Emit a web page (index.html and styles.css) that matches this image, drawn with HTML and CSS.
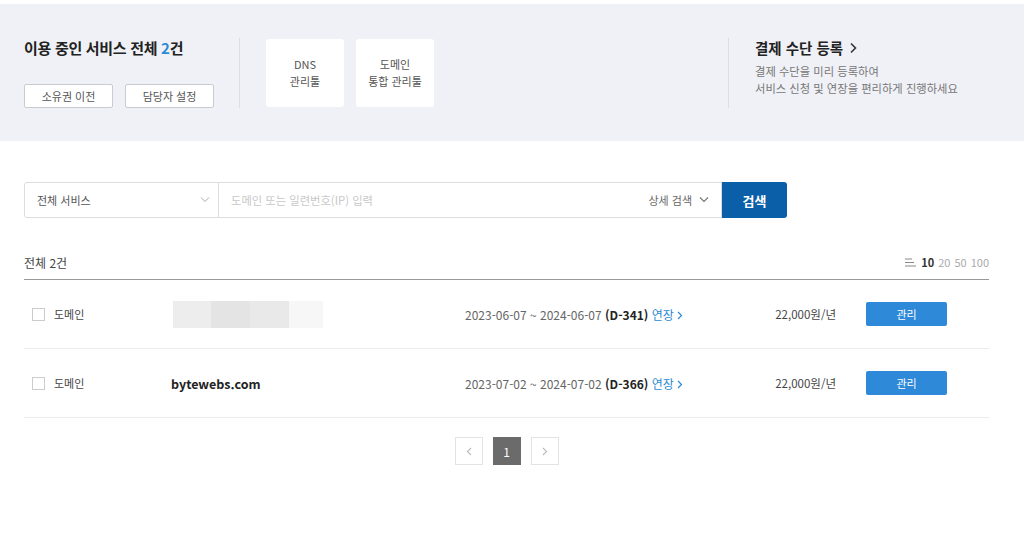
FILE: index.html
```html
<!DOCTYPE html>
<html lang="ko">
<head>
    <meta charset="UTF-8">
    <meta name="viewport" content="width=device-width, initial-scale=1.0">
    <title>서비스 관리</title>
    <link rel="stylesheet" href="styles.css">
</head>
<body>
    <div class="summary-panel">
        <div class="summary">
            <h2 class="summary-title">이용 중인 서비스 전체 <span class="count">2</span>건</h2>
            <div class="summary-actions">
                <button class="btn-line">소유권 이전</button>
                <button class="btn-line">담당자 설정</button>
            </div>
        </div>
        <div class="tools">
            <a class="tool-card" href="#">DNS<br>관리툴</a>
            <a class="tool-card" href="#">도메인<br>통합 관리툴</a>
        </div>
        <div class="payment">
            <a class="payment-title" href="#">결제 수단 등록
                <svg width="9" height="12" viewBox="0 0 9 12"><path d="M2 1.5 L6.5 6 L2 10.5" fill="none" stroke="#333" stroke-width="1.6"/></svg>
            </a>
            <p class="payment-desc">결제 수단을 미리 등록하여<br>서비스 신청 및 연장을 편리하게 진행하세요</p>
        </div>
    </div>

    <div class="content">
        <form class="search-bar">
            <div class="select-box">
                <span>전체 서비스</span>
                <svg width="10" height="6" viewBox="0 0 10 6"><path d="M1 0.5 L5 4.5 L9 0.5" fill="none" stroke="#aaa" stroke-width="1"/></svg>
            </div>
            <div class="search-input">
                <input type="text" placeholder="도메인 또는 일련번호(IP) 입력">
                <span class="detail-search">상세 검색
                    <svg width="10" height="6" viewBox="0 0 10 6"><path d="M1 0.5 L5 4.5 L9 0.5" fill="none" stroke="#777" stroke-width="1.1"/></svg>
                </span>
            </div>
            <button type="submit" class="btn-search">검색</button>
        </form>

        <div class="list-head">
            <span class="total">전체 2건</span>
            <div class="page-size">
                <svg width="11" height="9" viewBox="0 0 11 9"><path d="M0 1 H7 M0 4.5 H9 M0 8 H11" stroke="#888" stroke-width="1"/></svg>
                <span class="on">10</span><span>20</span><span>50</span><span>100</span>
            </div>
        </div>

        <ul class="service-list">
            <li class="service-row">
                <label class="kind"><span class="checkbox"></span>도메인</label>
                <div class="name">
                    <div class="blurred">
                        <span class="b1"></span><span class="b2"></span><span class="b3"></span><span class="b4"></span>
                    </div>
                </div>
                <div class="period">2023-06-07 ~ 2024-06-07 <b>(D-341)</b> <a href="#" class="renew">연장 <svg width="6" height="9" viewBox="0 0 6 9"><path d="M1 1 L4.5 4.5 L1 8" fill="none" stroke="#2a8ad4" stroke-width="1.2"/></svg></a></div>
                <div class="price">22,000원/년</div>
                <button class="btn-manage">관리</button>
            </li>
            <li class="service-row">
                <label class="kind"><span class="checkbox"></span>도메인</label>
                <div class="name"><b>bytewebs.com</b></div>
                <div class="period">2023-07-02 ~ 2024-07-02 <b>(D-366)</b> <a href="#" class="renew">연장 <svg width="6" height="9" viewBox="0 0 6 9"><path d="M1 1 L4.5 4.5 L1 8" fill="none" stroke="#2a8ad4" stroke-width="1.2"/></svg></a></div>
                <div class="price">22,000원/년</div>
                <button class="btn-manage">관리</button>
            </li>
        </ul>

        <div class="pagination">
            <a href="#" class="page-btn">
                <svg width="6" height="9" viewBox="0 0 6 9"><path d="M5 1 L1.5 4.5 L5 8" fill="none" stroke="#bbb" stroke-width="1.1"/></svg>
            </a>
            <a href="#" class="page-btn current">1</a>
            <a href="#" class="page-btn">
                <svg width="6" height="9" viewBox="0 0 6 9"><path d="M1 1 L4.5 4.5 L1 8" fill="none" stroke="#bbb" stroke-width="1.1"/></svg>
            </a>
        </div>
    </div>
</body>
</html>
```

FILE: styles.css
```css
body {
    margin: 0;
    padding: 0;
    background-color: #fff;
    font-family: "Noto Sans CJK KR", "Noto Sans", sans-serif;
    color: #333;
}

a {
    text-decoration: none;
    color: inherit;
}

/* 상단 요약 영역 */
.summary-panel {
    margin-top: 4px;
    height: 137px;
    box-sizing: border-box;
    padding: 34px 0 0 24px;
    background-color: #eff1f6;
    display: flex;
    align-items: flex-start;
}

.summary {
    width: 215px;
    height: 70px;
    border-right: 1px solid #dcdee3;
}

.summary-title {
    margin: 0;
    font-size: 15px;
    line-height: 20px;
    font-weight: bold;
    letter-spacing: -0.3px;
    color: #222;
}

.summary-title .count {
    color: #2a8ad4;
}

.summary-actions {
    display: flex;
    gap: 12px;
    margin-top: 26px;
}

.btn-line {
    width: 89px;
    height: 24px;
    padding: 0;
    background-color: #fff;
    border: 1px solid #c9cbd0;
    border-radius: 2px;
    font-family: inherit;
    font-size: 11px;
    color: #555;
}

.tools {
    flex: 1;
    display: flex;
    gap: 12px;
    padding-left: 26px;
    margin-top: 1px;
}

.tool-card {
    width: 78px;
    height: 68px;
    background-color: #fff;
    border-radius: 3px;
    display: flex;
    align-items: center;
    justify-content: center;
    text-align: center;
    font-size: 11px;
    line-height: 17px;
    color: #555;
}

.payment {
    width: 269px;
    height: 70px;
    padding-left: 26px;
    border-left: 1px solid #dcdee3;
}

.payment-title {
    display: flex;
    align-items: center;
    gap: 6px;
    font-size: 14.5px;
    line-height: 20px;
    font-weight: bold;
    color: #222;
}

.payment-desc {
    margin: 5px 0 0;
    font-size: 11.3px;
    line-height: 17px;
    color: #777;
}

/* 본문 */
.content {
    margin: 0 35px 0 24px;
}

.search-bar {
    margin-top: 41px;
    display: flex;
    height: 36px;
    width: 763px;
}

.select-box {
    width: 195px;
    box-sizing: border-box;
    border: 1px solid #ddd;
    border-radius: 3px 0 0 3px;
    display: flex;
    align-items: center;
    justify-content: space-between;
    padding: 0 8px 0 12px;
    font-size: 11px;
    color: #555;
}

.search-input {
    width: 503px;
    box-sizing: border-box;
    border: 1px solid #ddd;
    border-left: none;
    display: flex;
    align-items: center;
    padding: 0 12px 0 12px;
}

.search-input input {
    flex: 1;
    border: none;
    outline: none;
    padding: 0;
    font-family: inherit;
    font-size: 11.3px;
    color: #333;
}

.search-input input::placeholder {
    color: #c8c8c8;
}

.detail-search {
    display: flex;
    align-items: center;
    gap: 7px;
    font-size: 11px;
    color: #666;
}

.btn-search {
    width: 65px;
    border: none;
    border-radius: 0 3px 3px 0;
    background-color: #0b5ea8;
    color: #fff;
    font-family: inherit;
    font-size: 13px;
    font-weight: bold;
}

.list-head {
    margin-top: 32px;
    display: flex;
    justify-content: space-between;
    align-items: center;
    height: 24px;
    border-bottom: 1px solid #999;
    padding-bottom: 5px;
}

.total {
    font-size: 12px;
    color: #444;
}

.page-size {
    display: flex;
    align-items: center;
    gap: 4px;
    font-size: 11px;
    color: #aaa;
}

.page-size svg {
    margin-right: 1px;
}

.page-size .on {
    color: #333;
    font-weight: bold;
}

.service-list {
    list-style: none;
    margin: 0;
    padding: 0;
}

.service-row {
    display: grid;
    grid-template-columns: 147px 294px 300px 71px 30px 81px;
    align-items: center;
    height: 68px;
    border-bottom: 1px solid #ececec;
    font-size: 12px;
    color: #444;
}

.kind {
    display: flex;
    align-items: center;
    gap: 9px;
    padding-left: 8px;
    font-size: 11px;
}

.checkbox {
    width: 11px;
    height: 11px;
    border: 1px solid #ccc;
    background-color: #fff;
}

.name b {
    font-size: 12.5px;
    color: #222;
}

.blurred {
    display: flex;
    height: 27px;
    margin-left: 2px;
}

.blurred span {
    height: 100%;
}

.blurred .b1 { width: 38px; background-color: #ededed; }
.blurred .b2 { width: 39px; background-color: #e4e4e4; }
.blurred .b3 { width: 39px; background-color: #e9e9e9; }
.blurred .b4 { width: 34px; background-color: #f7f7f7; }

.period {
    font-size: 12px;
    color: #666;
    white-space: nowrap;
}

.period b {
    color: #222;
}

.renew {
    color: #2a8ad4;
}

.price {
    grid-column: 4;
    text-align: right;
    font-size: 11.5px;
    color: #444;
    white-space: nowrap;
}

.btn-manage {
    grid-column: 6;
    height: 24px;
    border: none;
    border-radius: 2px;
    background-color: #2e8ad8;
    color: #fff;
    font-family: inherit;
    font-size: 11px;
}

.pagination {
    display: flex;
    justify-content: center;
    gap: 10px;
    margin-top: 19px;
}

.page-btn {
    width: 28px;
    height: 28px;
    box-sizing: border-box;
    border: 1px solid #e3e3e3;
    display: flex;
    align-items: center;
    justify-content: center;
    font-size: 12px;
}

.page-btn.current {
    background-color: #6b6b6b;
    border-color: #6b6b6b;
    color: #fff;
}
```
